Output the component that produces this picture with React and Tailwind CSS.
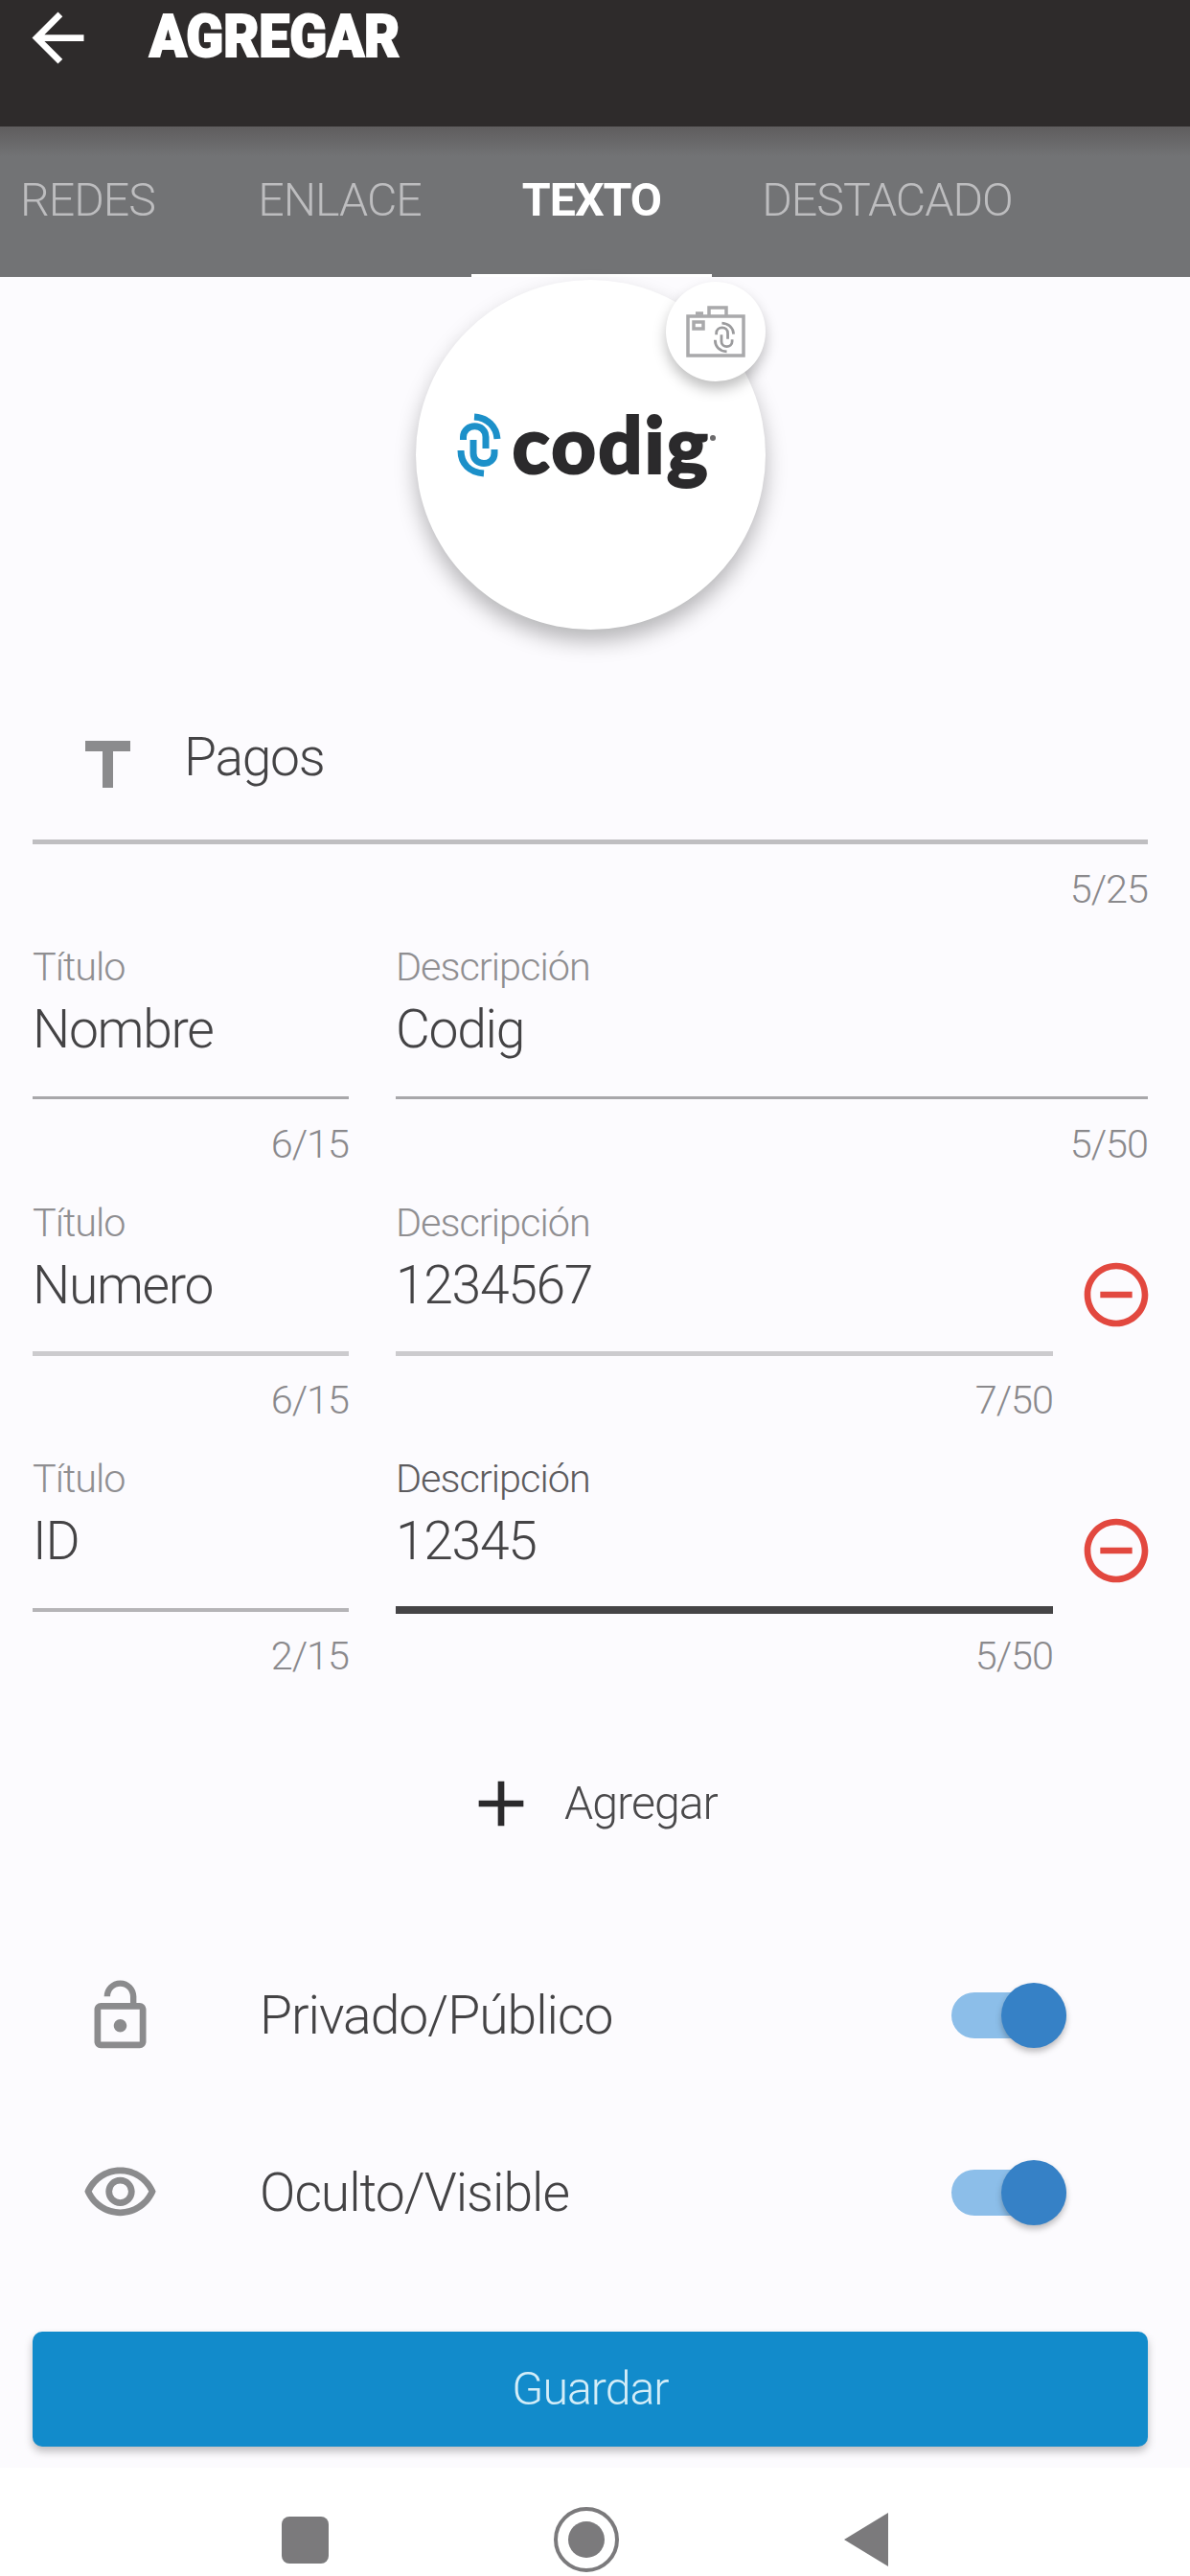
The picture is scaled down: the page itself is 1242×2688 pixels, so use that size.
import React, { useState } from 'react';
import { MdArrowBack, MdAdd, MdLockOpen, MdOutlineVisibility, MdRemoveCircleOutline } from 'react-icons/md';

const TABS = [
    { id: 'REDES', className: 'w-[251px] -ml-[34px]' },
    { id: 'ENLACE', className: 'w-[275px]' },
    { id: 'TEXTO', className: 'w-[251px]' },
    { id: 'DESTACADO', className: 'w-[366px]' },
];

const ROWS = [
    { title: 'Nombre', description: 'Codig', line: 'h-[3px] bg-[#a8a7aa]' },
    { title: 'Numero', description: '1234567', line: 'h-[5px] bg-[#cccbce]', removable: true },
    { title: 'ID', description: '12345', line: 'h-1 bg-[#b5b4b7]', removable: true, focused: true },
];

// Two interlocked links, shared by the logo and the camera badge
const Emblem = ({ className, strokeWidth }) => (
    <svg className={className} viewBox="0 0 46 67" fill="none" stroke="currentColor" strokeWidth={strokeWidth}>
        <path d="M18 4 C32 5 41 14 42 27" />
        <path d="M6.500 28 V25 C7 10 30 10 30 25 V37" />
        <path d="M17 28 V42 C17 56 39 56 39 42 V38" />
        <path d="M4 39 C4 53 13 62 28 63" />
    </svg>
);

const CameraIcon = () => (
    <svg className="h-[54px] w-[62px]" viewBox="0 0 62 54" fill="none" stroke="#a9a9ab" strokeWidth="3.500">
        <rect x="2" y="11" width="58" height="41" />
        <path d="M24 10 V2 H42 V10 M10 8 H18" />
        <rect x="8" y="17" width="10" height="7" />
    </svg>
);

const Field = ({ label, value, max, line, focused, className }) => (
    <div className={`flex flex-col ${className}`}>
        <span className={`text-[41.4px] leading-[48px] ${focused ? 'text-[#5c5b5e]' : 'text-[#8f8e91]'}`}>{label}</span>
        <span className="mt-[9px] text-[55.2px] leading-[64px] tracking-[-1.3px] text-[#444345]">{value}</span>
        <div className="mt-[35px] flex h-[9px] items-center">
            <div className={`w-full ${focused ? 'h-[8px] bg-[#454446]' : line}`} />
        </div>
        <span className="mt-5 text-right text-[41.4px] leading-[48px] text-[#8a898c]">{value.length}/{max}</span>
    </div>
);

const Toggle = ({ checked, onChange }) => (
    <button onClick={() => onChange(!checked)} className="flex h-[68px] w-[120px] items-center">
        <span className="flex h-[48px] w-full items-center justify-end rounded-full bg-[#8cbee9]">
            <span className="size-[68px] rounded-full bg-[#3681c6] shadow-[0_4px_6px_rgba(0,0,0,0.25)]" />
        </span>
    </button>
);

const App = () => {
    const [tab, setTab] = useState('TEXTO');
    const [isPublic, setIsPublic] = useState(true);
    const [isVisible, setIsVisible] = useState(true);

    return (
        <div className="flex h-[2688px] w-[1242px] flex-col overflow-hidden bg-[#fcfbfe] font-['Roboto',sans-serif] font-light tracking-[-1px]">
            {/* Header */}
            <header className="flex h-[132px] items-start bg-[#2e2b2b] text-white">
                <MdArrowBack className="mt-[-1px] ml-[20px] size-[81px]" />
                <h1 className="ml-[55px] origin-left scale-x-[0.92] text-[62px] leading-[75px] font-black tracking-normal [-webkit-text-stroke:2px_white]">AGREGAR</h1>
            </header>

            {/* Tabs */}
            <nav className="flex h-[157px] bg-linear-to-b from-[#5f5d5e] to-[#727375] to-20%">
                {TABS.map(t => (
                    <button
                        key={t.id}
                        onClick={() => setTab(t.id)}
                        className={`relative flex h-full shrink-0 items-center justify-center pb-[3px] text-[48.3px] ${t.className} ${tab === t.id ? 'font-bold text-white' : 'text-[#bdbdbf]'}`}
                    >
                        {t.id}
                        {tab === t.id && <span className="absolute inset-x-0 bottom-0 h-[3px] bg-white" />}
                    </button>
                ))}
            </nav>

            {/* Avatar */}
            <div className="mt-[3px] flex justify-center pr-[10px]">
                <div className="relative flex size-[365px] items-start rounded-full bg-white shadow-[0_12px_22px_rgba(0,0,0,0.28)]">
                    <div className="mt-[139px] ml-[43px] flex">
                        <Emblem className="h-[67px] w-[46px] text-[#1c90c9]" strokeWidth="7" />
                        <span className="mt-[-16px] ml-[12px] font-['Lato',sans-serif] text-[81px] leading-[96px] font-black tracking-[2.2px] text-[#2b2a2c] [-webkit-text-stroke:2px_#2b2a2c]">codig</span>
                        <span className="mt-[23px] size-[6px] rounded-full bg-[#6b6a6c]" />
                    </div>
                    <button className="absolute top-[2px] right-0 flex size-[104px] items-center justify-center rounded-full bg-white shadow-[0_8px_14px_rgba(0,0,0,0.25)]">
                        <CameraIcon />
                        <Emblem className="absolute top-[41px] left-[47px] h-[34px] w-[28px] text-[#9b9b9d]" strokeWidth="5.500" />
                    </button>
                </div>
            </div>

            <main className="flex flex-col pr-[44px] pl-[34px]">
                {/* Name of the block */}
                <div className="mt-[100px] flex h-[124px] items-start border-b-[5px] border-[#bfbec1]">
                    <div className="mt-[16px] ml-[55px] flex w-[47px] flex-col items-center">
                        <div className="h-[11px] w-full bg-[#8b8b8d]" />
                        <div className="h-[38px] w-[11px] bg-[#8b8b8d]" />
                    </div>
                    <span className="mt-px ml-[56px] text-[55.2px] leading-[64px] tracking-[-1.3px] text-[#444345]">Pagos</span>
                </div>
                <span className="mt-[23px] text-right text-[41.4px] leading-[48px] text-[#8a898c]">5/25</span>

                {/* Title / description pairs */}
                <div className="mt-[33px] flex flex-col gap-[34px]">
                    {ROWS.map(row => (
                        <div key={row.title} className="flex h-[233px]">
                            <Field label="Título" value={row.title} max={15} line={row.line} className="w-[330px]" />
                            <Field label="Descripción" value={row.description} max={50} line={row.line} focused={row.focused} className="ml-[49px] flex-1" />
                            {row.removable && (
                                <button className="mt-[59px] -mr-[7px] ml-[26px] size-[80px] text-[#e2483f]">
                                    <MdRemoveCircleOutline className="size-full" />
                                </button>
                            )}
                        </div>
                    ))}
                </div>

                <button className="mt-[90px] flex h-[80px] items-center justify-center text-[#4a494b]">
                    <MdAdd className="size-[80px] text-[#2b2a2c]" />
                    <span className="ml-[26px] text-[48.3px]">Agregar</span>
                </button>

                {/* Switches */}
                <div className="mt-[131px] flex flex-col gap-[85px]">
                    <div className="flex h-[100px] items-center">
                        <MdLockOpen className="ml-[51px] size-[81px] text-[#8b8b8d]" />
                        <span className="ml-[105px] flex-1 text-[55.2px] text-[#444345]">Privado/Público</span>
                        <div className="mr-[85px]"><Toggle checked={isPublic} onChange={setIsPublic} /></div>
                    </div>
                    <div className="flex h-[100px] items-center">
                        <MdOutlineVisibility className="ml-[51px] size-[81px] text-[#8b8b8d]" />
                        <span className="ml-[105px] flex-1 text-[55.2px] text-[#444345]">Oculto/Visible</span>
                        <div className="mr-[85px]"><Toggle checked={isVisible} onChange={setIsVisible} /></div>
                    </div>
                </div>

                <button className="mt-[95px] h-[120px] rounded-[10px] bg-[#128bcb] text-[48.3px] text-[#d3edf8] shadow-[0_5px_8px_rgba(0,0,0,0.25)]">
                    Guardar
                </button>
            </main>

            {/* System navigation */}
            <footer className="mt-[22px] flex flex-1 items-center bg-white pt-[37px] text-[#7b7a7c]">
                <div className="ml-[294px] size-[49px] rounded-[8px] bg-current" />
                <div className="ml-[235px] flex size-[68px] items-center justify-center rounded-full border-4 border-current">
                    <div className="size-[38px] rounded-full bg-current" />
                </div>
                <svg className="ml-[235px] h-[56px] w-[46px]" viewBox="0 0 46 56" fill="currentColor">
                    <path d="M46 0 V56 L0 28 Z" />
                </svg>
            </footer>
        </div>
    );
};

export default App;
